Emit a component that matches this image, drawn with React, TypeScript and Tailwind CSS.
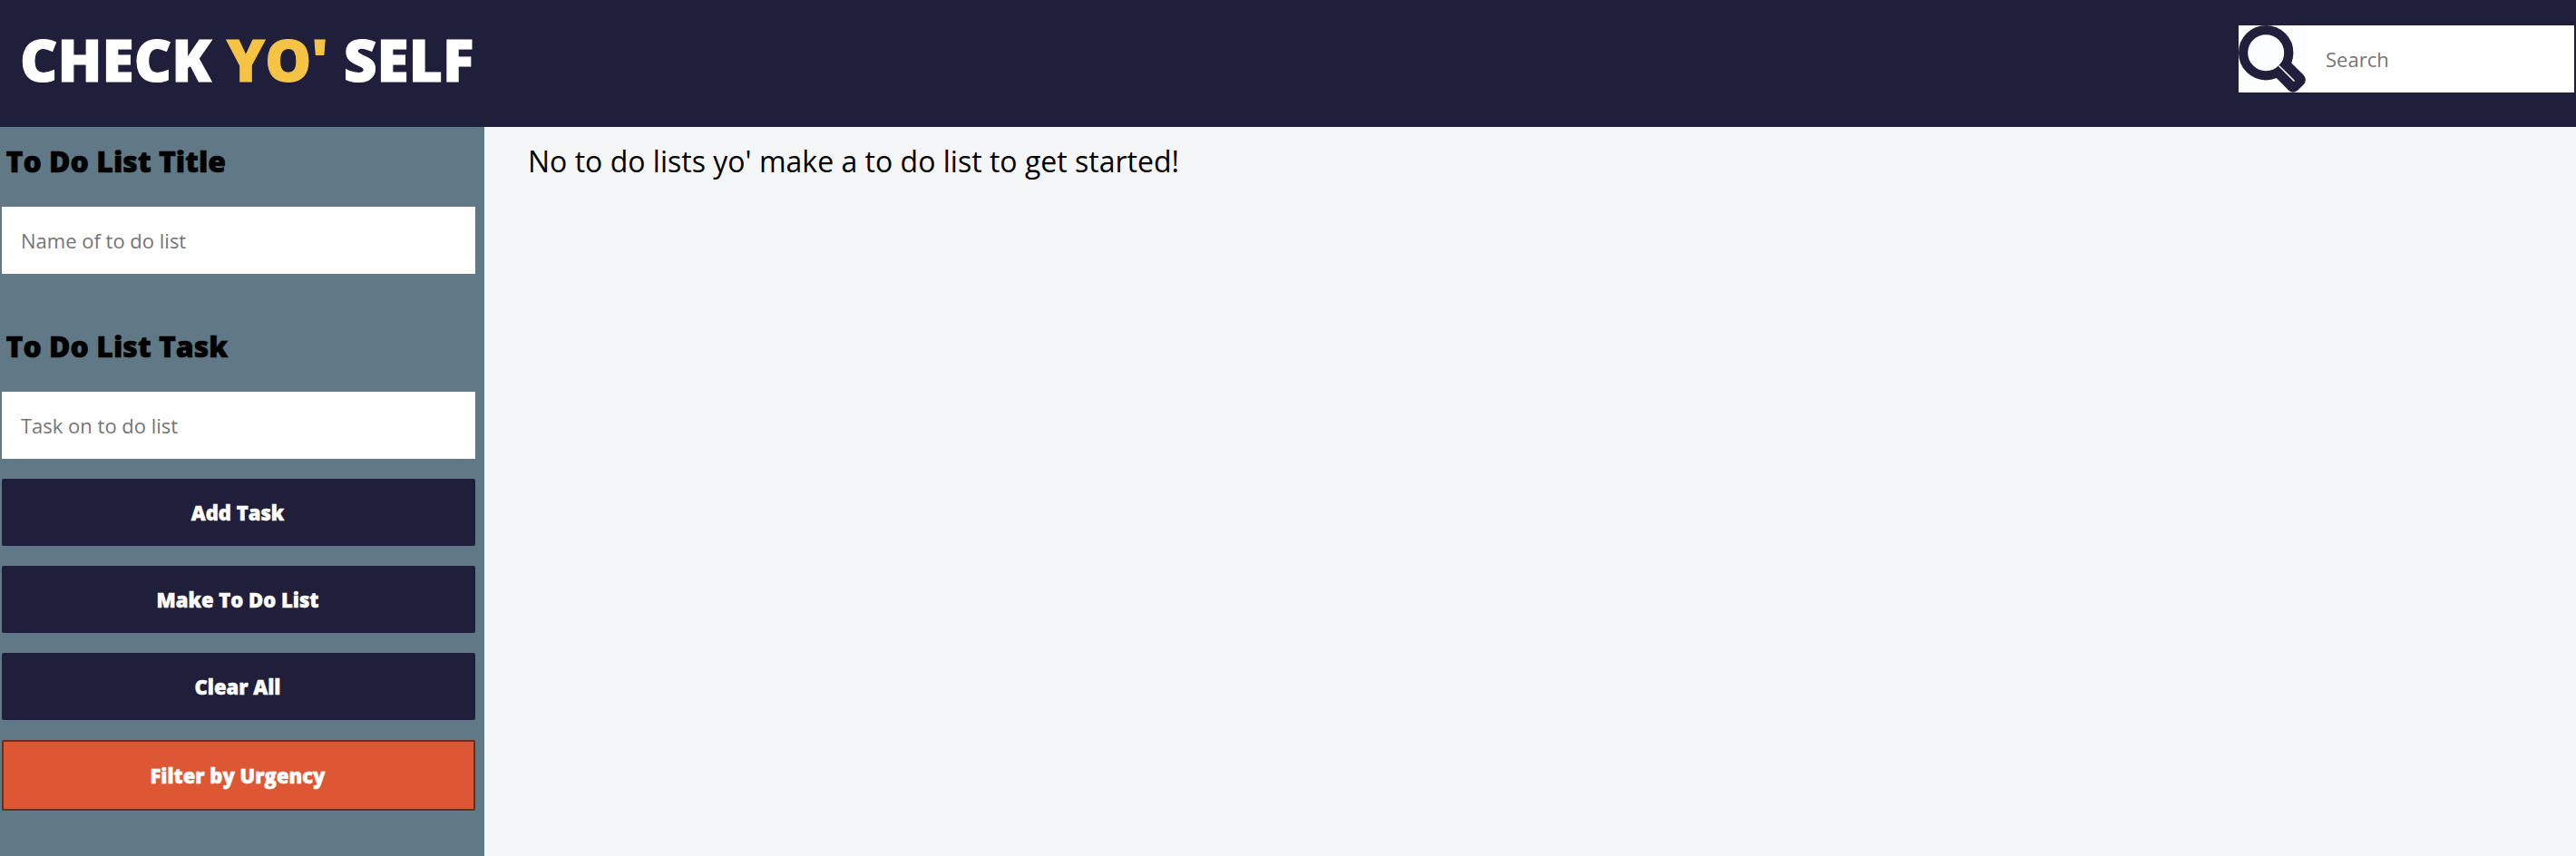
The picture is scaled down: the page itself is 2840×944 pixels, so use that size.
const btn = "h-[74px] w-[522px] rounded-[2px] bg-[#201f3b] pr-[2px] text-[22px] leading-none font-extrabold text-white [-webkit-text-stroke:0.5px]";
const input = "h-[74px] w-[522px] bg-white px-[21px] text-[22px] text-black placeholder:text-[#757575] placeholder:opacity-100 outline-none";

function SearchIcon() {
  return (
    <svg className="shrink-0 bg-[#fcfdff]" width="74" height="74" viewBox="0 0 74 74" fill="none">
      <circle cx="30.2" cy="30.2" r="25.1" stroke="#201f3b" strokeWidth="10.2" />
      <path d="M46 42.5L55 34L58.3 41.5L71.5 54.5Q76 59.5 72 65L65 71.7Q60 76 55 71.5L42 58.2L34 56L43 46Z" fill="#201f3b" />
      <path d="M44.5 44.5L61.5 61.5" stroke="#fcfdff" strokeWidth="1.6" />
    </svg>
  );
}

export default function App() {
  return (
    <div className="flex h-[944px] w-[2840px] flex-col bg-[#f4f6f8] font-['Open_Sans',sans-serif] text-black">
      <header className="flex h-[140px] items-start justify-between bg-[#201f3b]">
        <h1 className="pt-[19px] pl-[22px] text-[64px] leading-[94px] font-extrabold whitespace-nowrap text-white [-webkit-text-stroke:1px]">
          CHECK <span className="text-[#f6c445]">YO'</span> SELF
        </h1>
        <div className="mt-[28px] mr-[2px] flex h-[74px] w-[370px] bg-white">
          <SearchIcon />
          <input className="w-[296px] px-[22px] text-[22px] outline-none placeholder:text-[#757575]" placeholder="Search" />
        </div>
      </header>
      <div className="flex flex-1">
        <aside className="flex w-[534px] flex-col bg-[#617886] pl-[2px]">
          <h2 className="mt-[16px] pl-[4.5px] text-[32px] leading-[44px] font-extrabold [-webkit-text-stroke:0.6px]">To Do List Title</h2>
          <input className={input + " mt-[28px]"} placeholder="Name of to do list" />
          <h2 className="mt-[58px] pl-[4.5px] text-[32px] leading-[44px] font-extrabold [-webkit-text-stroke:0.6px]">To Do List Task</h2>
          <input className={input + " mt-[28px]"} placeholder="Task on to do list" />
          <button className={btn + " mt-[22px]"}>Add Task</button>
          <button className={btn + " mt-[22px]"}>Make To Do List</button>
          <button className={btn + " mt-[22px]"}>Clear All</button>
          <button className="mt-[22px] h-[78px] w-[522px] rounded-[2px] border-2 border-[#6f2b1b] bg-[#dd5735] pr-[2px] text-[22px] leading-none font-extrabold text-white [-webkit-text-stroke:0.5px]">Filter by Urgency</button>
        </aside>
        <main className="flex-1 pt-[16px] pl-[48px]">
          <p className="text-[32px] leading-[44px] tracking-[0.01px]">No to do lists yo' make a to do list to get started!</p>
        </main>
      </div>
    </div>
  );
}
